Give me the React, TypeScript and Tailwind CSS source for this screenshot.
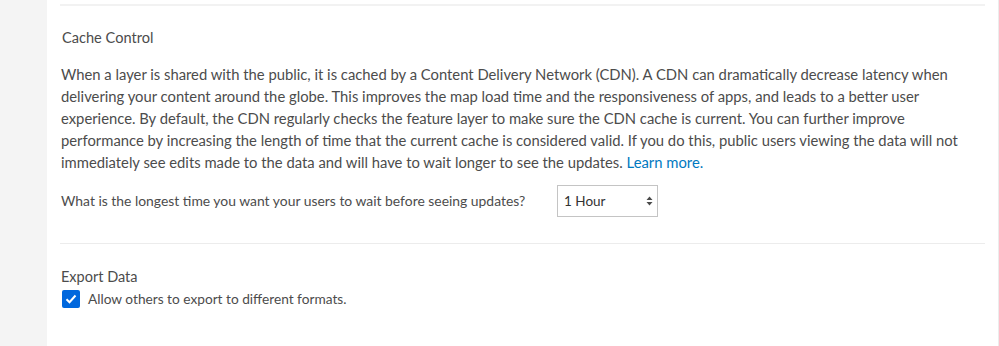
import React, { useState } from "react";

const font = { fontFamily: "Lato, 'Open Sans', sans-serif" };

const lines = [
  "When a layer is shared with the public, it is cached by a Content Delivery Network (CDN). A CDN can dramatically decrease latency when",
  "delivering your content around the globe. This improves the map load time and the responsiveness of apps, and leads to a better user",
  "experience. By default, the CDN regularly checks the feature layer to make sure the CDN cache is current. You can further improve",
  "performance by increasing the length of time that the current cache is considered valid. If you do this, public users viewing the data will not",
];

export default function App() {
  const [allowExport, setAllowExport] = useState(true);

  return (
    <div className="flex h-[346px] w-[999px] bg-[#f4f4f4] text-[#4c4c4c]" style={font}>
      <div className="w-[47px] shrink-0" />
      <div className="flex-1 bg-white border-r border-[#ececec] pl-[13px] pr-[13px]">
        <div className="mt-[4px] h-[2px] bg-[#f2f2f2]" />

        <h3 className="mt-[22px] text-[14.6px] leading-[20px] pl-[2px]">Cache Control</h3>

        <p className="mt-[15px] whitespace-nowrap text-[14.8px] leading-[22px] pl-[1px]">
          {lines.map((l) => (
            <React.Fragment key={l}>
              {l}
              <br />
            </React.Fragment>
          ))}
          immediately see edits made to the data and will have to wait longer to see the updates.{" "}
          <a href="#" className="text-[#0079c1]">
            Learn more.
          </a>
        </p>

        <div className="mt-[12px] flex items-center pl-[1px]">
          <span className="w-[496px] text-[13.9px]">
            What is the longest time you want your users to wait before seeing updates?
          </span>
          <div className="relative">
            <select
              className="h-[32px] w-[101px] appearance-none border border-[#c4c4c4] bg-white pl-[6px] text-[13.5px] text-[#323232] outline-none"
              style={font}
              defaultValue="1 Hour"
            >
              <option>1 Hour</option>
              <option>30 Minutes</option>
              <option>1 Day</option>
            </select>
            <svg
              className="pointer-events-none absolute right-[5px] top-[11px]"
              width="7"
              height="10"
              viewBox="0 0 7 10"
            >
              <path d="M3.5 0.5 L6.5 4 H0.5 Z M3.5 9.5 L6.5 6 H0.5 Z" fill="#4a4a4a" />
            </svg>
          </div>
        </div>

        <div className="mt-[26px] h-[1px] bg-[#ececec]" />

        <h3 className="mt-[23px] text-[14.5px] leading-[20px] pl-[1px]">Export Data</h3>

        <label className="mt-[2px] flex items-center gap-[8px] pl-[2px] text-[13.7px]">
          <button
            type="button"
            onClick={() => setAllowExport(!allowExport)}
            className={`flex h-[18px] w-[18px] items-center justify-center rounded-[2px] ${
              allowExport ? "bg-[#0067dd]" : "border border-[#999] bg-white"
            }`}
          >
            {allowExport && (
              <svg width="12" height="10" viewBox="0 0 12 10">
                <path d="M1.5 5.2 L4.5 8.2 L10.5 1.5" stroke="white" strokeWidth="2" fill="none" />
              </svg>
            )}
          </button>
          Allow others to export to different formats.
        </label>
      </div>
    </div>
  );
}
